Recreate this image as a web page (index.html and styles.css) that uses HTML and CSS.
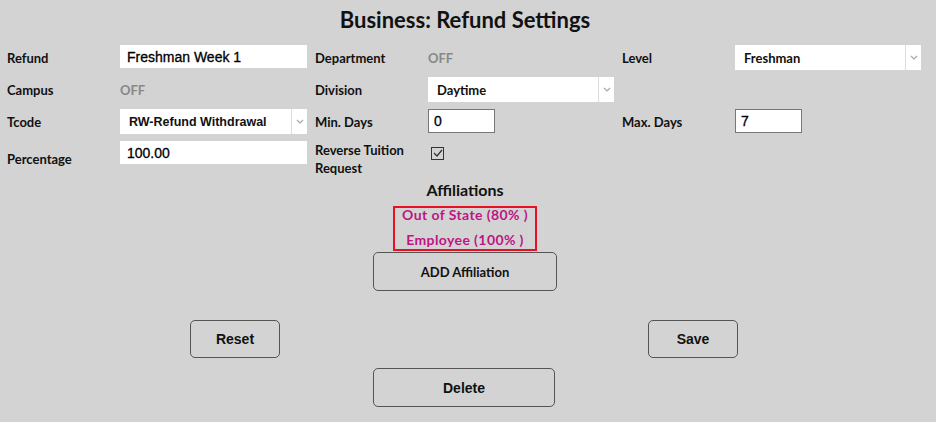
FILE: index.html
```html
<!DOCTYPE html>
<html>
<head>
<meta charset="utf-8">
<link rel="stylesheet" href="styles.css">
</head>
<body>
<div class="page">
  <h1 class="title">Business: Refund Settings</h1>
  <div class="form">
    <div class="label">Refund</div>
    <div class="field"><input class="text plain wide" value="Freshman Week 1"></div>
    <div class="label">Department</div>
    <div class="field off">OFF</div>
    <div class="label">Level</div>
    <div class="field"><div class="select w186"><span class="sel-text">Freshman</span><span class="sel-btn"><svg width="8" height="5" viewBox="0 0 8 5"><path d="M1 1 L4 4 L7 1" fill="none" stroke="#a8a8a8" stroke-width="1.2"/></svg></span></div></div>

    <div class="label">Campus</div>
    <div class="field off">OFF</div>
    <div class="label">Division</div>
    <div class="field"><div class="select w186"><span class="sel-text">Daytime</span><span class="sel-btn"><svg width="8" height="5" viewBox="0 0 8 5"><path d="M1 1 L4 4 L7 1" fill="none" stroke="#a8a8a8" stroke-width="1.2"/></svg></span></div></div>
    <div class="label"></div>
    <div class="field"></div>

    <div class="label">Tcode</div>
    <div class="field"><div class="select w187"><span class="sel-text arial">RW-Refund Withdrawal</span><span class="sel-btn"><svg width="8" height="5" viewBox="0 0 8 5"><path d="M1 1 L4 4 L7 1" fill="none" stroke="#a8a8a8" stroke-width="1.2"/></svg></span></div></div>
    <div class="label">Min. Days</div>
    <div class="field"><input class="text boxed small" value="0"></div>
    <div class="label">Max. Days</div>
    <div class="field"><input class="text boxed small" value="7"></div>

    <div class="label">Percentage</div>
    <div class="field"><input class="text plain wide" value="100.00"></div>
    <div class="label">Reverse Tuition Request</div>
    <div class="field"><span class="check"><svg width="10" height="8" viewBox="0 0 10 8"><path d="M1 4 L4 7 L9 1" fill="none" stroke="#333" stroke-width="1.3"/></svg></span></div>
    <div class="label"></div>
    <div class="field"></div>
  </div>

  <div class="affil">
    <h2 class="affil-title">Affiliations</h2>
    <div class="affil-box">
      <div class="affil-item">Out of State (80% )</div>
      <div class="affil-item">Employee (100% )</div>
    </div>
    <button class="btn btn-add">ADD Affiliation</button>
  </div>

  <div class="actions">
    <button class="btn btn-small">Reset</button>
    <button class="btn btn-small">Save</button>
  </div>
  <div class="delete-row">
    <button class="btn btn-delete">Delete</button>
  </div>
</div>
</body>
</html>
```
FILE: styles.css
```css
html, body {
  margin: 0;
  padding: 0;
  background: #d3d3d3;
}
.page {
  width: 936px;
  height: 422px;
  font-family: "Lato", "DejaVu Sans", sans-serif;
  color: #111;
}
.title {
  margin: 0;
  padding-top: 7px;
  height: 45px;
  box-sizing: border-box;
  text-align: center;
  font-size: 22px;
  font-weight: 700;
  line-height: 26px;
  padding-right: 6px;
}
.form {
  display: grid;
  grid-template-columns: 113px 195px 113px 194px 113px 187px;
  padding-left: 7px;
  row-gap: 7px;
  grid-auto-rows: minmax(24px, auto);
}
.label {
  font-size: 13px;
  font-weight: 700;
  align-self: center;
  line-height: 18px;
}
.field {
  align-self: start;
}
.off {
  align-self: center;
  color: #888;
  font-size: 13px;
  font-weight: 700;
}
.text {
  box-sizing: border-box;
  height: 23px;
  margin: 0;
  background: #fff;
  font-family: "Liberation Sans", Arial, sans-serif;
  font-size: 14px;
  color: #000;
  outline: none;
  -webkit-text-stroke: 0.3px #000;
}
.plain {
  border: none;
  padding: 0 7px;
}
.wide { width: 187px; }
.boxed {
  border: 1px solid #777;
  padding: 0 5px;
  height: 24px;
}
.small { width: 67px; }
.select {
  box-sizing: border-box;
  height: 25px;
  background: #fff;
  display: flex;
  align-items: center;
}
.w186 { width: 186px; }
.w187 { width: 187px; }
.sel-text {
  flex: 1;
  padding-left: 9px;
  font-size: 13px;
  font-weight: 700;
}
.sel-text.arial {
  font-family: "Liberation Sans", Arial, sans-serif;
  font-size: 12.5px;
}
.sel-btn {
  width: 15px;
  height: 100%;
  border-left: 1px solid #ddd;
  display: flex;
  align-items: center;
  justify-content: center;
}
.check {
  display: inline-flex;
  align-items: center;
  justify-content: center;
  box-sizing: border-box;
  width: 13px;
  height: 13px;
  border: 1px solid #333;
  margin: 1px 0 0 3px;
}
.affil {
  display: flex;
  flex-direction: column;
  align-items: center;
  padding-right: 6px;
  margin-top: 3px;
}
.affil-title {
  margin: 0;
  font-size: 16px;
  font-weight: 700;
  line-height: 20px;
  height: 26px;
}
.affil-box {
  box-sizing: border-box;
  width: 144px;
  height: 45px;
  border: 2px solid #e81123;
  padding: 0 0 2px;
  display: flex;
  flex-direction: column;
  align-items: center;
  justify-content: space-between;
  color: #bf1584;
  font-size: 14px;
  line-height: 14px;
  letter-spacing: 0.4px;
  font-weight: 700;
}
.btn {
  box-sizing: border-box;
  background: transparent;
  border: 1px solid #555;
  border-radius: 5px;
  font-family: "Liberation Sans", Arial, sans-serif;
  font-size: 14px;
  font-weight: 700;
  color: #111;
  padding: 0;
}
.btn-add {
  margin-top: 1px;
  width: 184px;
  height: 39px;
  font-family: "Lato", "DejaVu Sans", sans-serif;
  font-size: 13px;
}
.actions {
  margin-top: 29px;
  margin-left: 190px;
  width: 548px;
  display: flex;
  justify-content: space-between;
}
.btn-small {
  width: 90px;
  height: 38px;
}
.delete-row {
  margin-top: 10px;
  padding-left: 373px;
}
.btn-delete {
  width: 182px;
  height: 39px;
}
```
